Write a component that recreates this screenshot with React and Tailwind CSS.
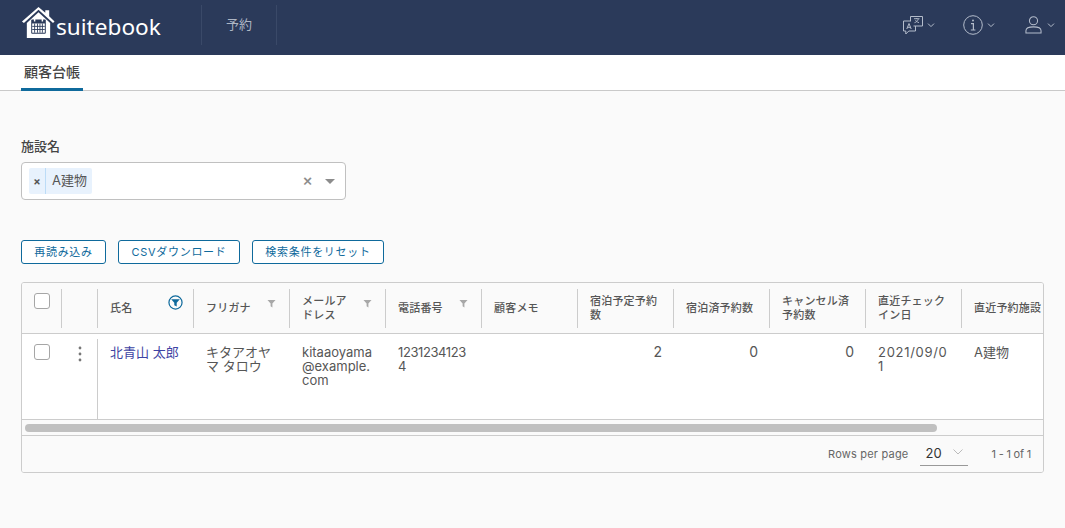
const SANS = "font-['Inter','Noto_Sans_CJK_JP',sans-serif]";

function Check() {
  return <div className="w-4 h-4 rounded-[3px] border border-[#a6a6a6] bg-white" />;
}

function Funnel() {
  return (
    <svg width="9" height="9" viewBox="0 0 10 10" className="shrink-0">
      <path d="M0.5 1h9L6 5v4.5L4 8V5z" fill="#a8a8a8" />
    </svg>
  );
}

function FunnelActive() {
  return (
    <svg width="15" height="15" viewBox="0 0 16 16" className="shrink-0">
      <circle cx="8" cy="8" r="7" fill="none" stroke="#0f6a9c" strokeWidth="1.3" />
      <path d="M3.4 4.5h9.2L9.3 8.3v3.9L6.7 10.8V8.3z" fill="#0f6a9c" />
    </svg>
  );
}

function Chev() {
  return (
    <svg width="8" height="8" viewBox="0 0 8 8" className="shrink-0">
      <path d="M1 2.6l3 3 3-3" fill="none" stroke="#b4bccb" strokeWidth="1" />
    </svg>
  );
}

function HeaderCell({ children, filter }) {
  return (
    <div className="w-[96px] shrink-0 h-[39px] flex items-center justify-between pl-3 pr-[12px] border-l border-[#cccccc]">
      <div className="-mt-[1px] text-[11px] leading-[14px] font-medium text-[#565656] tracking-[0.2px]">{children}</div>
      {filter === "on" ? <div className="self-start mt-[6px] mr-[-2px]"><FunnelActive /></div> : null}
      {filter === "off" ? <div className="self-start mt-[10px] mr-[1px]"><Funnel /></div> : null}
    </div>
  );
}

function Cell({ children, right, line, extra }) {
  return (
    <div className={`w-[96px] shrink-0 pt-[6px] leading-[14px] text-[#565656] break-all ${right ? "text-right pr-[11px] text-[14px]" : "pr-3 text-[13px]"} ${line ? "pl-3 border-l border-[#cccccc]" : "pl-[13px]"} ${extra || ""}`}>
      {children}
    </div>
  );
}

export default function App() {
  return (
    <div className={`w-[1065px] h-[528px] overflow-hidden bg-[#fafafa] ${SANS}`}>
      <header className="h-[55px] bg-[#2b3a5a] flex items-center pl-[21px]">
        <div className="w-[180px] h-[55px] flex items-start">
          <svg width="35" height="35" viewBox="0 0 36 36" className="mt-[5px] shrink-0">
            <path d="M1 17L18 2l7 6V5.5h4v6l5.5 5.5-1.6 1.6L18 5 3 18.6z" fill="#fff" />
            <path d="M6 18.5L18 7.5 30 18.5V34H6z" fill="#fff" />
            <rect x="10.5" y="15" width="15" height="14.5" rx="1" fill="#2b3a5a" />
            <rect x="11.5" y="19" width="13" height="9.5" fill="#fff" />
            <path d="M14 13v4M22 13v4" stroke="#fff" strokeWidth="1.5" />
            <path d="M14 19v9.5M17 19v9.5M19.5 19v9.5M22 19v9.5M11.5 22h13M11.5 25.2h13" stroke="#2b3a5a" strokeWidth=".9" />
          </svg>
          <span className="font-['Noto_Sans',sans-serif] text-[22.6px] leading-[30px] mt-[12px] text-white">suitebook</span>
        </div>
        <div className="-mt-[6px] h-[40px] w-[76px] border-x border-[#3a4968] flex items-center justify-center text-[13px] text-[#aeb6c4]">予約</div>
        <div className="-mt-[6px] ml-auto flex items-center">
          <div className="flex items-center gap-[4px] mr-[28px]">
            <svg width="21" height="20" viewBox="0 0 21 20" fill="none" stroke="#b4bccb" strokeWidth="1">
              <path d="M8 6H1.5v10h2.3v3l3-3h6.7v-5" />
              <path d="M8.5 6.5V1.5h12v9.5h-9" />
              <path d="M4.8 14l2.2-5.5L9.2 14M5.6 12.3h2.9" />
              <path d="M12 3.7h5.5M14.7 3v1M16.3 4c-.5 2-1.8 3-3.8 3.7M13.4 5c.6 1.1 1.7 2 3.6 2.7" strokeWidth=".9" />
            </svg>
            <Chev />
          </div>
          <div className="flex items-center gap-[4px] mr-[30px]">
            <svg width="20" height="20" viewBox="0 0 20 20" fill="none" stroke="#b4bccb" strokeWidth="1">
              <circle cx="10" cy="10" r="9.3" />
              <circle cx="10" cy="5.6" r="1" fill="#b4bccb" stroke="none" />
              <path d="M8 8.7h2.4v6.2M7.8 15h4.6" strokeWidth="1.2" />
            </svg>
            <Chev />
          </div>
          <div className="flex items-center gap-[5px] mr-[10px]">
            <svg width="17" height="20" viewBox="0 0 18 20" fill="none" stroke="#b4bccb" strokeWidth="1.1">
              <circle cx="9" cy="5.5" r="4.3" />
              <path d="M1 18.5v-2.5c0-2.6 3.5-4 8-4s8 1.4 8 4v2.5z" />
            </svg>
            <Chev />
          </div>
        </div>
      </header>

      <nav className="h-[36px] bg-white border-b border-[#c9c9c9] pl-[21px]">
        <div className="w-[62px] h-[36px] border-b-[3px] border-[#0f6a9c] flex justify-center pt-[8px] text-[14px] leading-[18px] font-medium text-[#444444]">顧客台帳</div>
      </nav>

      <main className="px-[21px] pt-[46px]">
        <label className="block text-[13px] leading-[18px] font-medium text-[#454545]">施設名</label>
        <div className="mt-[7px] w-[325px] h-[38px] rounded-[4px] border border-[#c0c0c0] bg-white flex items-center pl-[7px] pr-[10px]">
          <div className="h-[26px] rounded-[2px] bg-[#e8f2fd] flex items-center text-[13px] text-[#565656]">
            <span className="w-[17px] h-[26px] flex items-center justify-center text-[11px] font-bold text-[#555] border-r border-[#bcdcf7]">×</span>
            <span className="pl-[6px] pr-[5px]">A建物</span>
          </div>
          <span className="ml-auto -mt-[2px] text-[16px] leading-none font-medium text-[#8c8c8c]">×</span>
          <span className="ml-[12px] w-0 h-0 border-x-[5px] border-x-transparent border-t-[5px] border-t-[#8c8c8c] mt-[1px]" />
        </div>

        <div className="mt-[40px] flex gap-[12px]">
          {[["再読み込み", "w-[85px]"], ["CSVダウンロード", "w-[122px]"], ["検索条件をリセット", "w-[132px]"]].map(([t, w]) => (
            <button key={t} className={`${w} h-[24px] rounded-[3px] border border-[#0f6a9c] bg-white text-[11px] tracking-[0.7px] text-[#0f6a9c]`}>{t}</button>
          ))}
        </div>

        <div className="mt-[18px] w-[1023px] h-[191px] rounded-[3px] border border-[#cccccc] bg-white overflow-hidden flex flex-col">
          <div className="h-[51px] shrink-0 bg-[#fafafa] border-b border-[#cccccc] flex pt-[6px] overflow-hidden">
            <div className="w-[39px] shrink-0 pl-[12px] pt-[4px]"><Check /></div>
            <div className="w-[36px] shrink-0 h-[39px] border-l border-[#cccccc]" />
            <HeaderCell filter="on">氏名</HeaderCell>
            <HeaderCell filter="off">フリガナ</HeaderCell>
            <HeaderCell filter="off">メールア<br />ドレス</HeaderCell>
            <HeaderCell filter="off">電話番号</HeaderCell>
            <HeaderCell>顧客メモ</HeaderCell>
            <HeaderCell>宿泊予定予約数</HeaderCell>
            <HeaderCell>宿泊済予約数</HeaderCell>
            <HeaderCell>キャンセル済予約数</HeaderCell>
            <HeaderCell>直近チェックイン日</HeaderCell>
            <HeaderCell><span className="whitespace-nowrap">直近予約施設</span></HeaderCell>
          </div>
          <div className="h-[86px] shrink-0 flex border-b border-[#cccccc] pt-[5px] overflow-hidden">
            <div className="w-[39px] shrink-0 pl-[12px] pt-[5px]"><Check /></div>
            <div className="w-[36px] shrink-0 pl-[17px] pt-[7px]">
              <svg width="4" height="16" viewBox="0 0 4 16"><circle cx="2" cy="2" r="1.4" fill="#777" /><circle cx="2" cy="8" r="1.4" fill="#777" /><circle cx="2" cy="14" r="1.4" fill="#777" /></svg>
            </div>
            <Cell line><a className="text-[#3d43a3]">北青山 太郎</a></Cell>
            <Cell>キタアオヤマ タロウ</Cell>
            <Cell>kitaaoyama@example.com</Cell>
            <Cell extra="tracking-[-0.4px]">1231234123<br />4</Cell>
            <Cell />
            <Cell right>2</Cell>
            <Cell right>0</Cell>
            <Cell right>0</Cell>
            <Cell extra="tracking-[0.7px]">2021/09/0<br />1</Cell>
            <Cell>A建物</Cell>
          </div>
          <div className="h-[16px] shrink-0 bg-[#fafafa] border-b border-[#cccccc] px-[3px] pt-[4px]">
            <div className="w-[912px] h-[8px] rounded-full bg-[#c0c0c0]" />
          </div>
          <div className="flex-1 bg-[#fafafa] flex items-center justify-end pr-[12px] text-[11px] text-[#666666]">
            <span className="tracking-[0.2px]">Rows per page</span>
            <div className="ml-[12px] w-[48px] h-[24px] border-b border-[#999999] flex items-center justify-between pl-[5px] pr-[5px] text-[13px] text-[#333333]">
              <span>20</span>
              <svg width="10" height="6" viewBox="0 0 10 6" className="-mt-[3px]"><path d="M.5.5L5 5 9.5.5" fill="none" stroke="#bbbbbb" /></svg>
            </div>
            <span className="ml-[23px] tracking-[-0.2px]">1 - 1 of 1</span>
          </div>
        </div>
      </main>
    </div>
  );
}
